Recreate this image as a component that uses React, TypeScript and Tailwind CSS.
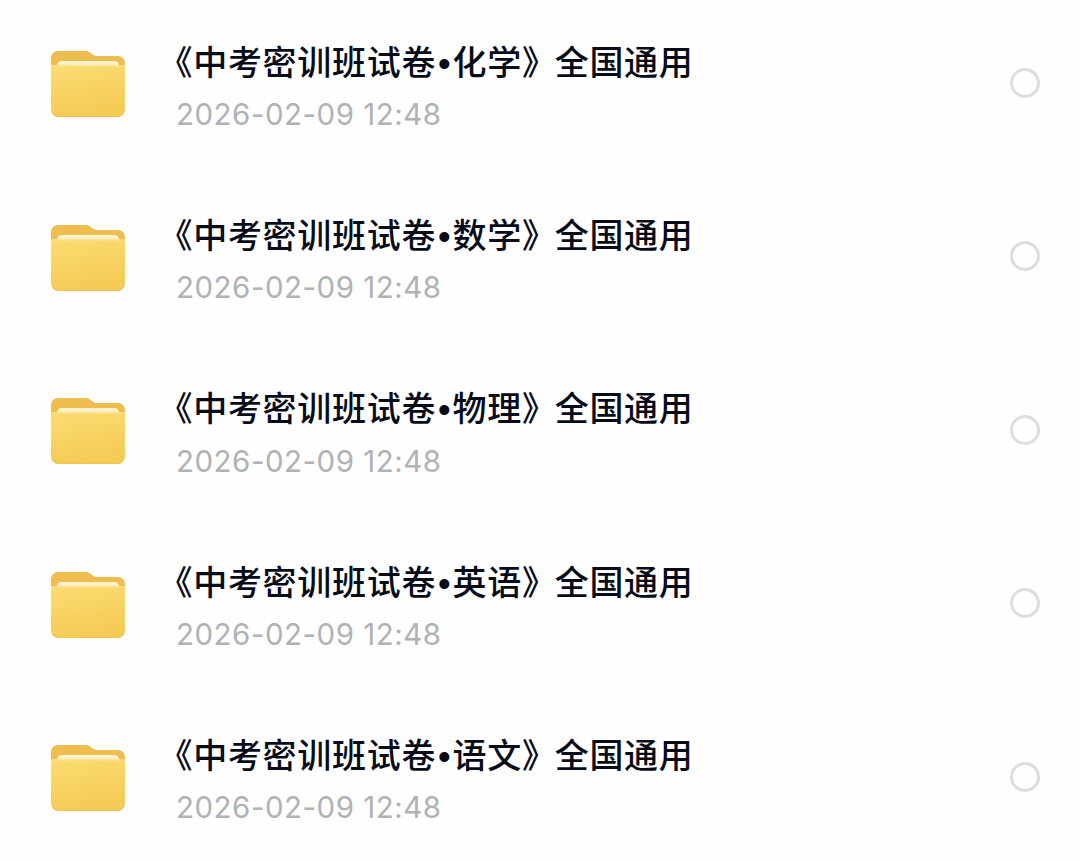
type Folder = {
  subject: string
  date: string
}

const folders: Folder[] = [
  { subject: '化学', date: '2026-02-09 12:48' },
  { subject: '数学', date: '2026-02-09 12:48' },
  { subject: '物理', date: '2026-02-09 12:48' },
  { subject: '英语', date: '2026-02-09 12:48' },
  { subject: '语文', date: '2026-02-09 12:48' },
]

function FolderIcon() {
  return (
    <svg viewBox="0 0 76 68" className="mt-[1.4px] h-[68px] w-[76px] shrink-0" aria-hidden="true">
      <defs>
        <linearGradient id="folder-front" x1="0" y1="0" x2="0.25" y2="1">
          <stop offset="0" stopColor="#fbdc72" />
          <stop offset="1" stopColor="#f4cb55" />
        </linearGradient>
        <linearGradient id="folder-paper" x1="0" y1="0" x2="0" y2="1">
          <stop offset="0" stopColor="#fff3d2" />
          <stop offset="1" stopColor="#fdebb4" />
        </linearGradient>
      </defs>
      {/* back panel with the tab */}
      <path
        d="M1 8a7 7 0 0 1 7-7h26.500c2.600 0 4.400.600 6.300 2l2.400 1.700c1.400 1 2.600 1.300 4.600 1.300H68a7 7 0 0 1 7 7V34H1Z"
        fill="#efbc4e"
      />
      {/* sheet of paper */}
      <path d="M7 17v-1.500a4.500 4.500 0 0 1 4.500-4.500h53a4.500 4.500 0 0 1 4.500 4.500V17Z" fill="url(#folder-paper)" />
      <path d="M1 15.500h74V59.500a7.500 7.500 0 0 1-7.500 7.500H8.500A7.500 7.500 0 0 1 1 59.500Z" fill="url(#folder-front)" />
      <path d="M2 61.500A7 7 0 0 0 8.500 66.500h59a7 7 0 0 0 6.500-5" fill="none" stroke="#efc252" />
      <path d="M1 16h74" stroke="#fde48c" strokeWidth="1" />
    </svg>
  )
}

function FolderRow({ subject, date }: Folder) {
  return (
    <li className="flex h-[173.4px] items-start pr-10 pl-[50px]">
      <FolderIcon />
      <div className="ml-[32.5px] flex-1 pt-[1px]">
        <div className="flex h-[20px] items-center whitespace-nowrap font-['Noto_Sans_CJK_SC',sans-serif] text-[34px] font-medium tracking-[0.7px] text-[#080c18]">
          <span>《中考密训班试卷</span>
          <span className="flex w-[16.5px] justify-center pt-[3px] font-['Inter',sans-serif] text-[32px] tracking-normal">
            •
          </span>
          <span>{subject}</span>
          <span className="-mr-[2px]">》</span>
          <span>全国通用</span>
        </div>
        <div className="mt-[31px] ml-[17.5px] flex h-[26px] items-center whitespace-nowrap font-['Inter',sans-serif] text-[29.5px] tracking-[0.5px] text-[#b0b2b5]">
          {date}
        </div>
      </div>
      <span className="mt-[19px] size-[30px] shrink-0 rounded-full border-[3px] border-[#dcdddd]" />
    </li>
  )
}

export default function App() {
  return (
    <main className="h-[861px] w-[1080px] overflow-hidden bg-[#fefefe]">
      <ul className="pt-[49px]">
        {folders.map((folder) => (
          <FolderRow key={folder.subject} {...folder} />
        ))}
      </ul>
    </main>
  )
}
